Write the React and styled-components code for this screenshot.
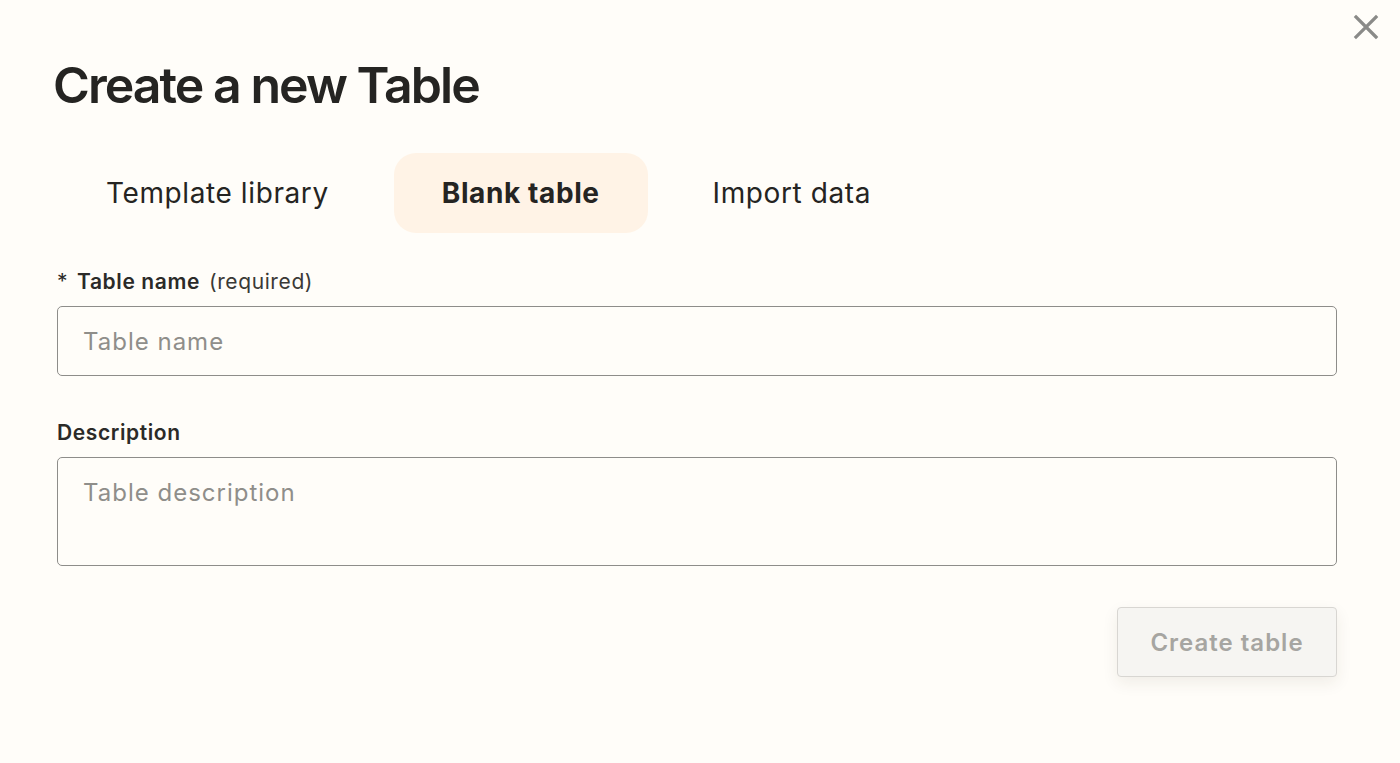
import React from "react";
import styled, { createGlobalStyle } from "styled-components";

const GlobalStyle = createGlobalStyle`
  html, body {
    margin: 0;
    padding: 0;
    background: #fffdf9;
    font-family: Inter, "Noto Sans", sans-serif;
    color: #2b2a28;
  }
`;

const Modal = styled.div`
  position: relative;
  width: 1400px;
  height: 763px;
  box-sizing: border-box;
  padding: 56px 63px 0 53px;
  background: #fffdf9;
`;

const CloseButton = styled.button`
  position: absolute;
  top: 13px;
  right: 20px;
  width: 28px;
  height: 28px;
  padding: 0;
  border: none;
  background: transparent;
  display: flex;
  align-items: center;
  justify-content: center;
  cursor: pointer;
`;

const Title = styled.h1`
  margin: 0;
  font-size: 50px;
  line-height: 58px;
  font-weight: 600;
  letter-spacing: -1.95px;
  color: #252422;
`;

const Tabs = styled.div`
  display: flex;
  align-items: center;
  gap: 17px;
  margin-top: 39px;
  margin-left: 5px;
`;

const Tab = styled.button`
  height: 80px;
  padding: 0 48px;
  border: none;
  border-radius: 22px;
  font-family: inherit;
  font-size: 28px;
  letter-spacing: 0.6px;
  font-weight: ${(p) => (p.active ? 700 : 400)};
  color: #252422;
  background: ${(p) => (p.active ? "#fff3e6" : "transparent")};
  cursor: pointer;
`;

const Form = styled.div`
  margin-top: 35px;
  margin-left: 4px;
  display: flex;
  flex-direction: column;
`;

const Label = styled.label`
  display: flex;
  align-items: baseline;
  gap: 9px;
  font-size: 21px;
  line-height: 28px;
  font-weight: 600;
  letter-spacing: 0.6px;
  color: #2b2a28;
  margin-bottom: 10px;
`;

const Star = styled.span`
  font-weight: 400;
  margin-right: 3px;
`;

const Hint = styled.span`
  font-weight: 400;
  color: #3a3936;
`;

const Input = styled.input`
  box-sizing: border-box;
  width: 100%;
  height: 70px;
  padding: 0 25px;
  border: 1.5px solid #8e8d8a;
  border-radius: 5px;
  background: transparent;
  font-family: inherit;
  font-size: 24px;
  letter-spacing: 1px;
  color: #2b2a28;
  outline: none;
  margin-bottom: 43px;

  &::placeholder {
    color: #8f8e8a;
  }
`;

const TextArea = styled.textarea`
  box-sizing: border-box;
  width: 100%;
  height: 109px;
  padding: 20px 25px;
  border: 1.5px solid #8e8d8a;
  border-radius: 5px;
  background: transparent;
  font-family: inherit;
  font-size: 24px;
  line-height: 30px;
  letter-spacing: 1px;
  color: #2b2a28;
  resize: none;
  outline: none;

  &::placeholder {
    color: #8f8e8a;
  }
`;

const Footer = styled.div`
  display: flex;
  justify-content: flex-end;
  margin-top: 41px;
`;

const SubmitButton = styled.button`
  box-sizing: border-box;
  width: 220px;
  height: 70px;
  border: 1.5px solid #d8d6d2;
  border-radius: 4px;
  background: #f6f5f2;
  color: #a6a5a1;
  font-family: inherit;
  font-size: 24px;
  font-weight: 600;
  letter-spacing: 1px;
  box-shadow: 0 6px 16px rgba(60, 50, 30, 0.08);
  cursor: not-allowed;
`;

export default function App() {
  return (
    <>
      <GlobalStyle />
      <Modal>
        <CloseButton aria-label="Close">
          <svg width="26" height="26" viewBox="0 0 26 26">
            <path
              d="M3 3 L23 23 M23 3 L3 23"
              stroke="#8a8a88"
              strokeWidth="3.2"
              strokeLinecap="square"
            />
          </svg>
        </CloseButton>
        <Title>Create a new Table</Title>
        <Tabs>
          <Tab>Template library</Tab>
          <Tab active>Blank table</Tab>
          <Tab>Import data</Tab>
        </Tabs>
        <Form>
          <Label>
            <span>
              <Star>*</Star> Table name
            </span>
            <Hint>(required)</Hint>
          </Label>
          <Input placeholder="Table name" />
          <Label>Description</Label>
          <TextArea placeholder="Table description" />
          <Footer>
            <SubmitButton disabled>Create table</SubmitButton>
          </Footer>
        </Form>
      </Modal>
    </>
  );
}
